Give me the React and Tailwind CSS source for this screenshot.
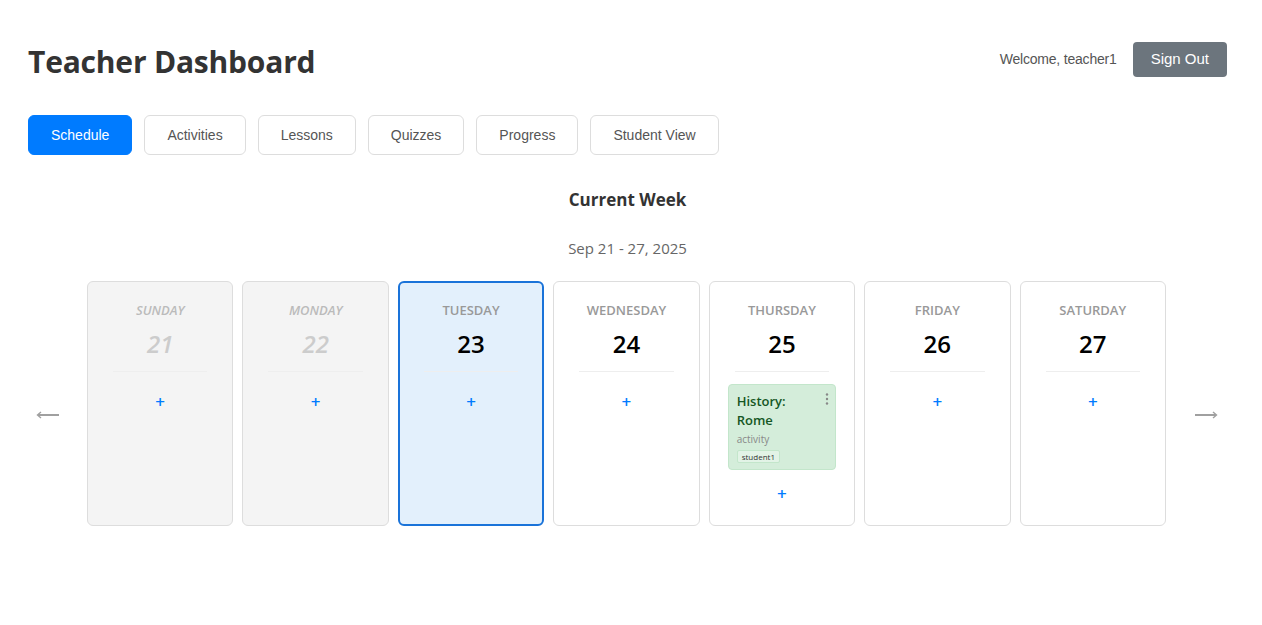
import React from "react";

const tabs = ["Schedule", "Activities", "Lessons", "Quizzes", "Progress", "Student View"];

const days = [
  { name: "Sunday", date: 21, past: true },
  { name: "Monday", date: 22, past: true },
  { name: "Tuesday", date: 23, today: true },
  { name: "Wednesday", date: 24 },
  {
    name: "Thursday",
    date: 25,
    events: [{ title: "History: Rome", type: "activity", student: "student1" }],
  },
  { name: "Friday", date: 26 },
  { name: "Saturday", date: 27 },
];

const Arrow = ({ flip }) => (
  <svg
    width="23"
    height="8"
    viewBox="0 0 23 8"
    className={flip ? "rotate-180" : ""}
  >
    <path d="M0 4 H21" stroke="#a0a0a0" strokeWidth="2" />
    <path d="M18 1 L21.5 4 L18 7" stroke="#a0a0a0" strokeWidth="1.4" fill="none" />
  </svg>
);

const EventCard = ({ event }) => (
  <div className="rounded-[4px] border border-[#c3e6cb] bg-[#d4edda] px-2 pt-[7px] pb-[6px] text-left">
    <div className="flex items-start">
      <div className="flex-1 pr-3 text-[13px] font-semibold leading-[19px] text-[#155724]">
        {event.title}
      </div>
      <svg width="4" height="12" viewBox="0 0 4 12" className="mt-[1px] -mr-[2px] text-[#888]">
        <circle cx="2" cy="1.5" r="1.2" fill="currentColor" />
        <circle cx="2" cy="6" r="1.2" fill="currentColor" />
        <circle cx="2" cy="10.5" r="1.2" fill="currentColor" />
      </svg>
    </div>
    <div className="mt-[2px] text-[10px] leading-[14px] text-[#888]">{event.type}</div>
    <div className="mt-[4px] flex">
      <span className="rounded-[2px] border border-[#c3e6cb] bg-[#e2f3e6] px-1 text-[8px] leading-[11px] text-[#333]">
        {event.student}
      </span>
    </div>
  </div>
);

const DayCard = ({ day }) => {
  let box = "border border-[#dddddd] bg-white";
  if (day.past) box = "border border-[#dddddd] bg-[#f4f4f4]";
  if (day.today) box = "border-2 border-[#1a73d9] bg-[#e3f0fc]";
  return (
    <div
      className={`flex-1 h-[245px] rounded-[6px] ${box} ${
        day.today ? "pt-[18px] px-[17px]" : "pt-[19px] px-[18px]"
      } text-center`}
    >
      <div
        className={`text-[13px] leading-[18px] font-semibold uppercase ${
          day.past ? "italic text-[#bbbbbb]" : "text-[#999999]"
        }`}
      >
        {day.name}
      </div>
      <div
        className={`mt-[9px] text-[24px] leading-[32px] font-semibold ${
          day.past ? "italic text-[#cccccc]" : "text-black"
        }`}
      >
        {day.date}
      </div>
      <div className="mx-[7px] mt-[11px] border-t border-[#eeeeee]" />
      <div className="pt-3 flex flex-col gap-1.5">
        {(day.events || []).map((e) => (
          <EventCard key={e.title} event={e} />
        ))}
        <div className="py-2 text-[17px] leading-[20px] font-semibold text-[#007bff]">+</div>
      </div>
    </div>
  );
};

export default function App() {
  return (
    <div
      className="min-h-screen bg-white pl-[28px] pr-[35px] pt-[40px]"
      style={{ fontFamily: '"Open Sans", "Noto Sans", sans-serif' }}
    >
      <div className="flex items-start justify-between">
        <h1 className="text-[30px] leading-[43px] font-bold text-[#333333] tracking-[-0.2px]">
          Teacher Dashboard
        </h1>
        <div
          className="mt-[2px] flex items-center gap-4"
          style={{ fontFamily: '"Liberation Sans", Arial, sans-serif' }}
        >
          <span className="text-[14px] tracking-[-0.2px] text-[#555555]">Welcome, teacher1</span>
          <button className="h-[35px] rounded-[4px] bg-[#6c757d] px-[18px] text-[15px] text-white">
            Sign Out
          </button>
        </div>
      </div>

      <div
        className="mt-8 flex gap-3"
        style={{ fontFamily: '"Liberation Sans", Arial, sans-serif' }}
      >
        {tabs.map((t, i) => (
          <button
            key={t}
            className={`h-10 rounded-[6px] px-[22px] text-[14px] ${
              i === 0
                ? "border border-[#007bff] bg-[#007bff] text-white"
                : "border border-[#dddddd] bg-white text-[#555555]"
            }`}
          >
            {t}
          </button>
        ))}
      </div>

      <h2 className="mt-[33px] text-center text-[17px] leading-[24px] font-bold text-[#333333]">
        Current Week
      </h2>
      <div className="mt-[26px] text-center text-[15px] leading-[20px] text-[#666666]">
        Sep 21 - 27, 2025
      </div>

      <div className="mt-[23px] flex items-center">
        <button className="flex w-[59px] justify-start pl-[8px] pt-[22px]">
          <Arrow flip />
        </button>
        <div className="flex flex-1 gap-[9px]">
          {days.map((d) => (
            <DayCard key={d.name} day={d} />
          ))}
        </div>
        <button className="flex w-[61px] justify-end pr-[9px] pt-[22px]">
          <Arrow />
        </button>
      </div>
    </div>
  );
}
